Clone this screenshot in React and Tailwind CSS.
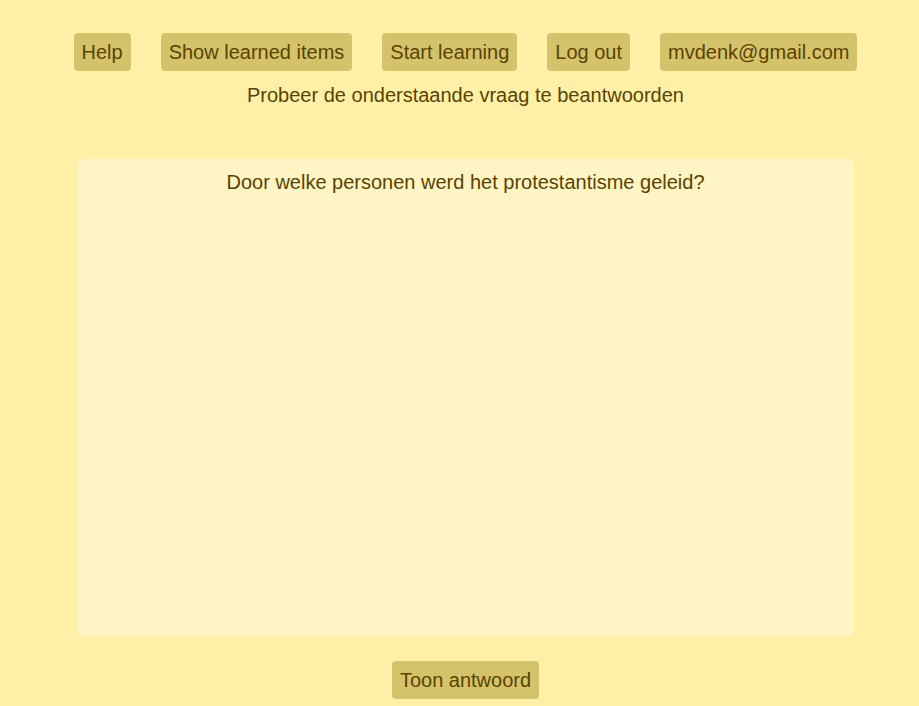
export default function App() {
  const nav = ['Help', 'Show learned items', 'Start learning', 'Log out', 'mvdenk@gmail.com']
  return (
    <div className="min-h-[706px] bg-[#fff0a8] text-[#5a4300] font-['Liberation_Sans',Arial,sans-serif] text-[20px] leading-[23px] pl-[12px]">
      <div className="flex justify-center gap-[30px] pt-[33px]">
        {nav.map((n) => (
          <button key={n} className="bg-[#d4c36b] rounded-[4px] px-[8px] py-[8px] leading-[22px]">
            {n}
          </button>
        ))}
      </div>
      <p className="text-center mt-[13px]">Probeer de onderstaande vraag te beantwoorden</p>
      <div className="mx-auto mt-[52px] w-[777px] h-[477px] bg-[#fff4c4] rounded-[6px] pt-[12px] text-center">
        Door welke personen werd het protestantisme geleid?
      </div>
      <div className="flex justify-center mt-[25px]">
        <button className="bg-[#d4c36b] rounded-[4px] px-[8px] py-[8px] leading-[22px]">Toon antwoord</button>
      </div>
    </div>
  )
}
